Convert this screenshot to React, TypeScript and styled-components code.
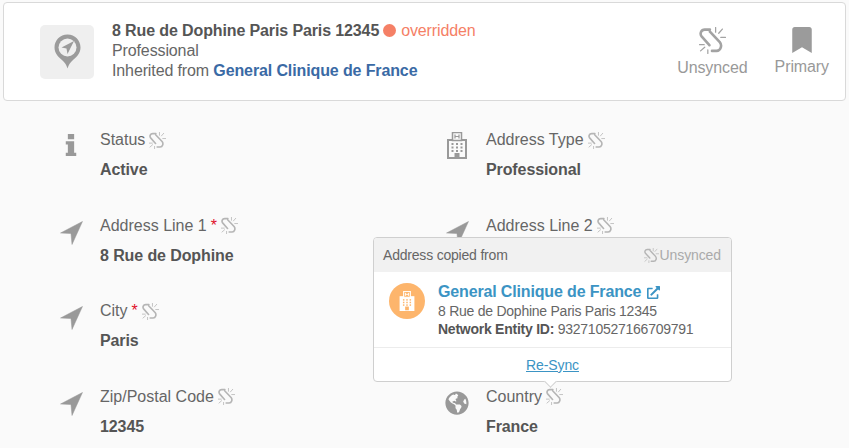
import React from "react";
import styled, { createGlobalStyle } from "styled-components";
import { FaGlobeAmericas, FaBookmark, FaExternalLinkAlt } from "react-icons/fa";

const GlobalStyle = createGlobalStyle`
  html, body {
    margin: 0;
    padding: 0;
    background: #fafafa;
    overflow: hidden;
  }
  body {
    font-family: "Liberation Sans", Arial, sans-serif;
    font-size: 16px;
    color: #555;
  }
`;

function Unlink({ size = 16, color = "#b5b5b5" }: { size?: number; color?: string }) {
  return (
    <svg width={size} height={size} viewBox="4 3 26 26" fill="none" stroke={color}>
      <path
        d="M14.500 5.500H9.500C6 5.500 4.500 9.500 6.500 12L14 20.500M14.500 7.500L24 17.500C26.500 20.500 25 26 21 26H16.500"
        strokeWidth="2.500"
        strokeLinecap="round"
      />
      <path
        d="M20 3.500V8M26.500 5L23 9M29.500 13H25M4.500 20H9M5.500 26L9.500 22.500M12.500 28.500V25"
        strokeWidth="1.200"
        strokeLinecap="round"
      />
    </svg>
  );
}

function PinIcon() {
  return (
    <svg width="27" height="35" viewBox="0 0 27 35">
      <path
        d="M13.5 0.5C6 0.5 0.5 6.3 0.5 13.5C0.5 19.5 5 23.5 8.5 26.5C10.5 28.3 12.5 31 13.5 34.5C14.5 31 16.5 28.3 18.5 26.5C22 23.5 26.500 19.500 26.500 13.500C26.500 6.300 21 0.500 13.500 0.500Z"
        fill="#9b9b9b"
      />
      <circle cx="13.5" cy="13.5" r="9" fill="#efefef" />
      <path d="M20 7L7.500 13.500L12.500 14.500L13.500 20Z" fill="#9b9b9b" />
    </svg>
  );
}

function InfoIcon() {
  return (
    <svg width="12" height="22" viewBox="0 0 10 21" fill="#999">
      <path d="M2 0H8V5H2ZM0 7H8V18H10V21H0V18H2V10H0Z" />
    </svg>
  );
}

function ArrowIcon() {
  return (
    <svg width="23" height="24" viewBox="0 0 22 23" fill="#999">
      <path d="M21.500 0.500L0.500 11.500L10.500 12L11.500 22.500Z" stroke="#999" strokeWidth="0.500" />
    </svg>
  );
}

const WINDOWS = [11, 14.5, 18];

function HospitalIcon({
  width,
  height,
  color,
  bg,
  filled,
}: {
  width: number;
  height: number;
  color: string;
  bg: string;
  filled?: boolean;
}) {
  return (
    <svg width={width} height={height} viewBox="0 0 20 27">
      <rect x="1" y="8" width="18" height="18" fill={filled ? color : "none"} stroke={color} strokeWidth="2" />
      <rect x="5.500" y="0.500" width="9" height="8" fill={bg} stroke={color} strokeWidth="1.500" />
      <path d="M8 2.500V6.500M12 2.500V6.500M8 4.500H12" stroke={color} strokeWidth="1.200" fill="none" />
      {WINDOWS.map((y) =>
        [4.5, 9, 13.5].map((x) => (
          <rect key={`${x}-${y}`} x={x} y={y} width="2" height="2" fill={filled ? bg : color} />
        ))
      )}
      <rect x="7.500" y="21" width="5" height="5" fill={filled ? bg : color} />
    </svg>
  );
}

type Field = {
  label: string;
  value: string;
  icon: React.ReactNode;
  iconTop: number;
  required?: boolean;
};

const fields: Field[] = [
  { label: "Status", value: "Active", icon: <InfoIcon />, iconTop: 4 },
  {
    label: "Address Type",
    value: "Professional",
    icon: <HospitalIcon width={22} height={27} color="#999" bg="#fafafa" />,
    iconTop: 2,
  },
  { label: "Address Line 1", value: "8 Rue de Dophine", icon: <ArrowIcon />, iconTop: 5, required: true },
  { label: "Address Line 2", value: "", icon: <ArrowIcon />, iconTop: 5 },
  { label: "City", value: "Paris", icon: <ArrowIcon />, iconTop: 5, required: true },
  { label: "", value: "", icon: null, iconTop: 0 },
  { label: "Zip/Postal Code", value: "12345", icon: <ArrowIcon />, iconTop: 5 },
  { label: "Country", value: "France", icon: <FaGlobeAmericas size={24} />, iconTop: 4 },
];

export default function App() {
  return (
    <Page>
      <GlobalStyle />
      <Header>
        <PinBox>
          <PinIcon />
        </PinBox>
        <HeaderText>
          <HeaderTitle>
            <strong>8 Rue de Dophine Paris Paris 12345</strong>
            <Dot />
            <Overridden>overridden</Overridden>
          </HeaderTitle>
          <div>Professional</div>
          <div>
            Inherited from <InheritedLink>General Clinique de France</InheritedLink>
          </div>
        </HeaderText>
        <HeaderAction>
          <Unlink size={27} color="#a3a3a3" />
          <span>Unsynced</span>
        </HeaderAction>
        <HeaderAction>
          <FaBookmark size={26} color="#9b9b9b" />
          <span>Primary</span>
        </HeaderAction>
      </Header>

      <Fields>
        {fields.map((f, i) => (
          <FieldRow key={i}>
            <FieldIcon $top={f.iconTop}>{f.icon}</FieldIcon>
            {f.label && (
              <div>
                <FieldLabel>
                  {f.label}
                  {f.required && <Required>*</Required>}
                  <Unlink size={17} />
                </FieldLabel>
                <FieldValue>{f.value}</FieldValue>
              </div>
            )}
          </FieldRow>
        ))}
      </Fields>

      <Popover>
        <PopoverHead>
          <span>Address copied from</span>
          <PopoverStatus>
            <Unlink size={15} />
            Unsynced
          </PopoverStatus>
        </PopoverHead>
        <PopoverBody>
          <EntityBadge>
            <HospitalIcon width={16} height={20} color="#fff" bg="#fdb56c" filled />
          </EntityBadge>
          <div>
            <EntityName>
              General Clinique de France
              <FaExternalLinkAlt size={13} />
            </EntityName>
            <EntityLine>8 Rue de Dophine Paris Paris 12345</EntityLine>
            <EntityLine>
              <strong>Network Entity ID:</strong> 932710527166709791
            </EntityLine>
          </div>
        </PopoverBody>
        <PopoverFoot>
          <ResyncLink href="#">Re-Sync</ResyncLink>
        </PopoverFoot>
        <Caret />
      </Popover>
    </Page>
  );
}

const Page = styled.div`
  position: relative;
  width: 849px;
  height: 448px;
  overflow: hidden;
  padding: 2px 3px 0;
  box-sizing: border-box;
`;

const Header = styled.div`
  display: flex;
  align-items: center;
  box-sizing: border-box;
  height: 99px;
  padding: 0 16px 0 36px;
  background: #fff;
  border: 1px solid #d9d9d9;
  border-radius: 4px;
`;

const PinBox = styled.div`
  display: flex;
  align-items: center;
  justify-content: center;
  width: 54px;
  height: 54px;
  margin-right: 18px;
  background: #efefef;
  border-radius: 5px;
`;

const HeaderText = styled.div`
  flex: 1;
  padding-bottom: 2px;
  line-height: 20px;
  letter-spacing: -0.12px;
  color: #666;
`;

const HeaderTitle = styled.div`
  display: flex;
  align-items: center;
  color: #555;
`;

const Dot = styled.span`
  width: 13px;
  height: 13px;
  margin: 0 5px 0 4px;
  background: #f58066;
  border-radius: 50%;
`;

const Overridden = styled.span`
  color: #f58066;
`;

const InheritedLink = styled.strong`
  color: #3a6aa5;
`;

const HeaderAction = styled.div`
  display: flex;
  flex-direction: column;
  align-items: center;
  gap: 5px;
  margin-left: 27px;
  letter-spacing: -0.1px;
  color: #999;
`;

const Fields = styled.div`
  display: grid;
  grid-template-columns: 386px 386px;
  grid-auto-rows: 85.5px;
  padding: 29px 0 0 55px;
`;

const FieldRow = styled.div`
  display: flex;
  align-items: flex-start;
`;

const FieldIcon = styled.div<{ $top: number }>`
  display: flex;
  justify-content: center;
  width: 26px;
  margin-right: 16px;
  padding-top: ${(props) => props.$top}px;
  color: #999;
`;

const FieldLabel = styled.div`
  display: flex;
  align-items: center;
  gap: 4px;
  height: 20px;
  color: #666;
`;

const Required = styled.span`
  color: #e0102a;
`;

const FieldValue = styled.div`
  margin-top: 11px;
  font-weight: 700;
  letter-spacing: -0.1px;
  color: #555;
`;

const Popover = styled.div`
  position: absolute;
  left: 373px;
  top: 237px;
  width: 359px;
  background: #fff;
  border: 1px solid #cfcfcf;
  border-radius: 4px;
  box-sizing: border-box;
  font-size: 14px;
`;

const PopoverHead = styled.div`
  display: flex;
  justify-content: space-between;
  align-items: center;
  height: 34px;
  padding: 0 10px 0 9px;
  background: #f1f1f1;
  letter-spacing: -0.2px;
  color: #666;
  border-radius: 3px 3px 0 0;
`;

const PopoverStatus = styled.span`
  display: flex;
  align-items: center;
  gap: 1px;
  letter-spacing: -0.1px;
  color: #aaa;
`;

const PopoverBody = styled.div`
  display: flex;
  align-items: flex-start;
  padding: 10px 15px 0;
  height: 76px;
  box-sizing: border-box;
  border-bottom: 1px solid #ececec;
`;

const EntityBadge = styled.div`
  display: flex;
  align-items: center;
  justify-content: center;
  flex: none;
  width: 36px;
  height: 36px;
  margin: 1px 13px 0 0;
  background: #fdb56c;
  border-radius: 50%;
`;

const EntityName = styled.div`
  display: flex;
  align-items: center;
  gap: 6px;
  font-size: 16px;
  font-weight: 700;
  line-height: 20px;
  letter-spacing: -0.15px;
  color: #3b94c4;
`;

const EntityLine = styled.div`
  line-height: 18px;
  letter-spacing: -0.25px;
  color: #666;

  strong {
    color: #555;
  }
`;

const PopoverFoot = styled.div`
  display: flex;
  justify-content: center;
  align-items: center;
  height: 33px;
`;

const ResyncLink = styled.a`
  letter-spacing: -0.1px;
  color: #3b94c4;
  text-decoration: underline;
`;

const Caret = styled.span`
  position: absolute;
  left: 172px;
  bottom: -5px;
  width: 8px;
  height: 8px;
  background: #fff;
  border-right: 1px solid #cfcfcf;
  border-bottom: 1px solid #cfcfcf;
  transform: rotate(45deg);
`;
